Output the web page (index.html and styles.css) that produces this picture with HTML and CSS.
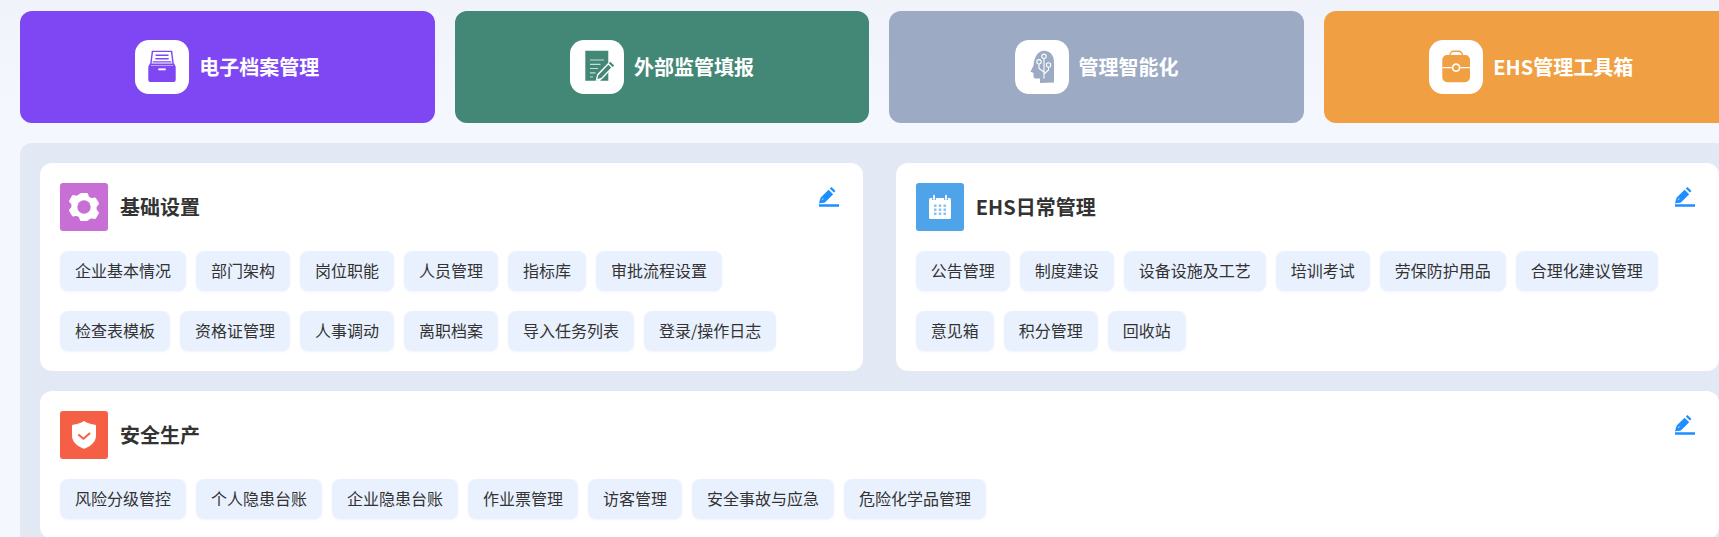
FILE: index.html
```html
<!DOCTYPE html>
<html lang="zh-CN">
<head>
<meta charset="utf-8">
<title>EHS</title>
<link rel="stylesheet" href="styles.css">
</head>
<body>
<div class="page">
  <div class="tiles">
    <div class="tile tile-purple">
      <span class="tile-icon">
        <svg viewBox="0 0 54 54" class="tile-svg">
          <path fill="#7e47f3" d="M16.800 10.700h20.400L39 25H15z"/>
          <path fill="#fff" d="M18.100 12.100h17.800l1.500 11.500H16.600z"/>
          <path fill="#7e47f3" d="M20.500 14.600h13v1.500h-13zM20.300 18h13.400v1.500H20.300zM17.600 21.200h18.800v1.300H17.600z"/>
          <path fill="#7e47f3" d="M15 23.200l1 2.300h22l1-2.300 1.700 3.600V40a2 2 0 0 1-2 2H15.300a2 2 0 0 1-2-2V26.800z"/>
          <path fill="#fff" d="M23.300 28.400h7.400v1.900h-7.400z"/>
        </svg>
      </span>
      <span class="tile-name">电子档案管理</span>
    </div>
    <div class="tile tile-green">
      <span class="tile-icon">
        <svg viewBox="0 0 54 54" class="tile-svg">
          <path fill="#438776" d="M15.300 10.700h23v17l-11 13h-12z"/>
          <path fill="#438776" d="M38.300 31v9.700h-8.200z"/>
          <path fill="none" stroke="#c8dcd6" stroke-width="1.200" d="M20 20h14M20 24.300h10.500M20 28.500h8M20 32.800h5.500M20 37h3"/>
          <path fill="#438776" stroke="#fff" stroke-width="1.400" d="M26.500 40.200l1.300-5.500 10.500-10.900 3.900 3.800-10.500 10.900z"/>
          <path fill="#438776" d="M38.800 23.300l1.500-1.500 3.900 3.800-1.500 1.500z"/>
        </svg>
      </span>
      <span class="tile-name">外部监管填报</span>
    </div>
    <div class="tile tile-slate">
      <span class="tile-icon">
        <svg viewBox="0 0 54 54" class="tile-svg">
          <path fill="#9caac4" d="M29 10.700c6.500 0 10 5 10 11v20.800l-14 .5v-4.500h-4.500a2 2 0 0 1-2-2v-3.500l-3-1.200 3-6.300c.500-8.800 5-14.800 10.500-14.800z"/>
          <g fill="none" stroke="#fff" stroke-width="1.100">
            <path d="M29 18.500v20M24 24v4.500l5 3.500M33.500 27.200v2.800l-4.500 4"/>
            <circle cx="29" cy="16.300" r="2.200"/>
            <circle cx="24" cy="21.800" r="2.200"/>
            <circle cx="33.500" cy="25" r="2.200"/>
          </g>
        </svg>
      </span>
      <span class="tile-name">管理智能化</span>
    </div>
    <div class="tile tile-orange">
      <span class="tile-icon">
        <svg viewBox="0 0 54 54" class="tile-svg">
          <path fill="none" stroke="#f09f43" stroke-width="1.400" d="M21 16v-1a3.700 3.700 0 0 1 3.700-3.700h5A3.700 3.700 0 0 1 33.400 15v1"/>
          <path fill="#f09f43" d="M18 15h18.300a4.700 4.700 0 0 1 4.700 4.700V37.300a5 5 0 0 1-5 5H18.300a5 5 0 0 1-5-5V19.700A4.700 4.700 0 0 1 18 15z"/>
          <path stroke="#fff" stroke-width="1.300" d="M13.300 27.700h9.500M31.500 27.700H41"/>
          <circle cx="27.100" cy="27.700" r="3.500" fill="#f09f43" stroke="#fff" stroke-width="1.700"/>
        </svg>
      </span>
      <span class="tile-name">EHS管理工具箱</span>
    </div>
  </div>

  <div class="panel">
    <section class="card">
      <header class="card-head">
        <span class="card-icon icon-pink">
          <svg viewBox="0 0 48 48" class="card-svg">
            <path fill="#fff" fill-rule="evenodd" stroke="#fff" stroke-width="2" stroke-linejoin="round" d="M21 11h6l1.300 3.500 3 1.700 3.700-.7 3 5.100-2.400 2.900v3.400l2.400 2.900-3 5.100-3.700-.7-3 1.700L27 37h-6l-1.300-3.500-3-1.700-3.700.7-3-5.100 2.400-2.900V21.100L10 18.200l3-5.100 3.700.7 3-1.700z"/>
            <circle cx="24" cy="24" r="6.700" fill="#c86fd6"/>
          </svg>
        </span>
        <h2 class="card-title">基础设置</h2>
        <svg viewBox="0 0 20 20" class="edit"><use href="#edit"/></svg>
      </header>
      <div class="chips">
        <span class="chip">企业基本情况</span><span class="chip">部门架构</span><span class="chip">岗位职能</span><span class="chip">人员管理</span><span class="chip">指标库</span><span class="chip">审批流程设置</span><span class="chip">检查表模板</span><span class="chip">资格证管理</span><span class="chip">人事调动</span><span class="chip">离职档案</span><span class="chip">导入任务列表</span><span class="chip">登录/操作日志</span>
      </div>
    </section>
    <section class="card">
      <header class="card-head">
        <span class="card-icon icon-blue">
          <svg viewBox="0 0 48 48" class="card-svg">
            <rect x="13" y="15" width="22" height="21" rx="1.500" fill="#fff"/>
            <path fill="none" stroke="#4fa3e8" stroke-width="3.600" d="M18 14v3M30 14v3"/>
            <path fill="none" stroke="#fff" stroke-width="1.800" stroke-linecap="round" d="M18 12.700v3.300M30 12.700v3.300"/>
            <path fill="#8cc2ef" d="M18 21.500h2.500V24H18zM22.700 21.500h2.600V24h-2.600zM27.500 21.500H30V24h-2.500zM18 25.500h2.500V28H18zM22.700 25.500h2.600V28h-2.600zM27.500 25.500H30V28h-2.500zM18 29.500h2.500V32H18zM22.700 29.500h2.600V32h-2.600zM27.500 29.500H30V32h-2.500z"/>
          </svg>
        </span>
        <h2 class="card-title">EHS日常管理</h2>
        <svg viewBox="0 0 20 20" class="edit"><use href="#edit"/></svg>
      </header>
      <div class="chips">
        <span class="chip">公告管理</span><span class="chip">制度建设</span><span class="chip">设备设施及工艺</span><span class="chip">培训考试</span><span class="chip">劳保防护用品</span><span class="chip">合理化建议管理</span><span class="chip">意见箱</span><span class="chip">积分管理</span><span class="chip">回收站</span>
      </div>
    </section>
    <section class="card card-wide">
      <header class="card-head">
        <span class="card-icon icon-red">
          <svg viewBox="0 0 48 48" class="card-svg">
            <path fill="#fff" stroke="#fff" stroke-width="1" stroke-linejoin="round" d="M24 10.500c3 2 7 3.300 11.500 3.800v10.200c0 6.500-5 10.500-11.500 12.800-6.500-2.300-11.500-6.300-11.500-12.800V14.300C17 13.800 21 12.500 24 10.500z"/>
            <path fill="none" stroke="#f55f45" stroke-width="2" d="M18.300 23.500l5.200 4.300 6.500-5.800"/>
          </svg>
        </span>
        <h2 class="card-title">安全生产</h2>
        <svg viewBox="0 0 20 20" class="edit"><use href="#edit"/></svg>
      </header>
      <div class="chips">
        <span class="chip">风险分级管控</span><span class="chip">个人隐患台账</span><span class="chip">企业隐患台账</span><span class="chip">作业票管理</span><span class="chip">访客管理</span><span class="chip">安全事故与应急</span><span class="chip">危险化学品管理</span>
      </div>
    </section>
  </div>
</div>
<svg class="defs" aria-hidden="true">
  <symbol id="edit" viewBox="0 0 20 20">
    <path d="M0 17.300h20v2.400H0zM9.600 2.700l4.600 4.500-8.300 8.200-3.300.3-.9-.9 3.900-4.300-4 2.900.1-2.800z"/>
    <path d="M1.300 11.300 5.400 15.300 0 16.500zM10.800 1.500 12.500 0l4 3.900-1.600 1.600z"/>
  </symbol>
</svg>
</body>
</html>
```
FILE: styles.css
```css
* { box-sizing: border-box; }
html, body {
  margin: 0;
  height: 537px;
  overflow: hidden;
  background: #f4f7fd;
}
body {
  font-family: "Noto Sans CJK SC", "Liberation Sans", sans-serif;
  color: #333;
  background: linear-gradient(#f0f3f9, #f4f7fd 110px);
}
.page {
  width: 1718.5px;
  margin-left: 20px;
  padding-top: 11px;
}
.tiles {
  display: grid;
  grid-template-columns: repeat(4, 1fr);
  gap: 20px;
}
.tile {
  height: 112px;
  border-radius: 12px;
  display: flex;
  align-items: center;
  justify-content: center;
  gap: 10px;
  color: #fff;
}
.tile-purple { background: #7e47f3; }
.tile-green { background: #438776; }
.tile-slate { background: #9caac4; }
.tile-orange { background: #f09f43; }
.tile-icon {
  width: 54px;
  height: 54px;
  border-radius: 14px;
  background: #fff;
  flex: none;
}
.tile-svg, .card-svg {
  display: block;
  width: 100%;
  height: 100%;
}
.tile-name {
  font-size: 20px;
  font-weight: 700;
  line-height: 28px;
}
.panel {
  margin-top: 20px;
  padding: 20px;
  border-radius: 12px;
  background: #e2e8f4;
  display: grid;
  grid-template-columns: 1fr 1fr;
  column-gap: 33px;
  row-gap: 20px;
}
.card {
  background: #fff;
  border-radius: 12px;
  padding: 20px;
}
.card-wide { grid-column: 1 / span 2; }
.card-head {
  display: flex;
  align-items: center;
  gap: 12px;
  height: 48px;
  position: relative;
}
.card-icon {
  width: 48px;
  height: 48px;
  border-radius: 3px;
  flex: none;
}
.icon-pink { background: #c86fd6; }
.icon-blue { background: #4fa3e8; }
.icon-red { background: #f55f45; }
.card-title {
  margin: 0;
  font-size: 20px;
  font-weight: 700;
  line-height: 28px;
  color: #333;
}
.edit {
  position: absolute;
  right: 4px;
  top: 4px;
  width: 20px;
  height: 20px;
  fill: #1e8fff;
}
.chips {
  margin-top: 20px;
  padding-right: 20px;
  display: flex;
  flex-wrap: wrap;
  gap: 20px 10px;
}
.chip {
  height: 40px;
  padding: 0 15px;
  border-radius: 8px;
  background: #e9f1fe;
  box-shadow: 0 1px 2px rgba(90, 120, 180, .08);
  font-size: 16px;
  line-height: 38px;
  color: #333;
}
.defs {
  position: absolute;
  width: 0;
  height: 0;
}
```
